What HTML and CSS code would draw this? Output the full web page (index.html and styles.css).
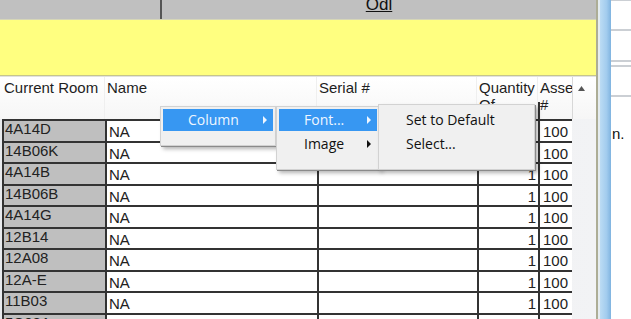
FILE: index.html
```html
<!DOCTYPE html>
<html>
<head>
<meta charset="utf-8">
<link rel="stylesheet" href="styles.css">
</head>
<body>
<div class="screen">
  <div class="main">
    <div class="topbar">
      <div class="tb-left"></div>
      <div class="tb-right"><span class="tb-title">Odl</span></div>
    </div>
    <div class="band"></div>
    <div class="thead">
      <div class="th th-room">Current Room</div>
      <div class="th th-name">Name</div>
      <div class="th th-serial">Serial #</div>
      <div class="th th-qty">Quantity Of</div>
      <div class="th th-asset">Asset #</div>
      <div class="th th-sort"><svg class="sort-icon" width="7" height="5" viewBox="0 0 7 5"><polygon points="3.5,0 7,5 0,5" fill="#555"/></svg></div>
    </div>
    <div class="tbody">
      <div class="row"><div class="td room">4A14D</div><div class="td name">NA</div><div class="td serial"></div><div class="td qty">1</div><div class="td asset">100</div></div>
      <div class="row"><div class="td room">14B06K</div><div class="td name">NA</div><div class="td serial"></div><div class="td qty">1</div><div class="td asset">100</div></div>
      <div class="row"><div class="td room">4A14B</div><div class="td name">NA</div><div class="td serial"></div><div class="td qty">1</div><div class="td asset">100</div></div>
      <div class="row"><div class="td room">14B06B</div><div class="td name">NA</div><div class="td serial"></div><div class="td qty">1</div><div class="td asset">100</div></div>
      <div class="row"><div class="td room">4A14G</div><div class="td name">NA</div><div class="td serial"></div><div class="td qty">1</div><div class="td asset">100</div></div>
      <div class="row"><div class="td room">12B14</div><div class="td name">NA</div><div class="td serial"></div><div class="td qty">1</div><div class="td asset">100</div></div>
      <div class="row"><div class="td room">12A08</div><div class="td name">NA</div><div class="td serial"></div><div class="td qty">1</div><div class="td asset">100</div></div>
      <div class="row"><div class="td room">12A-E</div><div class="td name">NA</div><div class="td serial"></div><div class="td qty">1</div><div class="td asset">100</div></div>
      <div class="row"><div class="td room">11B03</div><div class="td name">NA</div><div class="td serial"></div><div class="td qty">1</div><div class="td asset">100</div></div>
      <div class="row"><div class="td room">5C08A</div><div class="td name">NA</div><div class="td serial"></div><div class="td qty">1</div><div class="td asset">100</div></div>
    </div>
  </div>
  <div class="side">
    <div class="edge"></div>
    <div class="edge2"></div>
    <div class="blue"></div>
    <div class="win">
      <div class="wline wl1"></div>
      <div class="wline wl2"></div>
      <div class="wline wl3"></div>
      <div class="wline wl4"></div>
      <div class="wline wl5"></div>
      <div class="wtext">n.</div>
    </div>
  </div>

  <div class="menu m1">
    <div class="item hl"><span>Column</span><span class="arrow"></span></div>
  </div>
  <div class="menu m2">
    <div class="item hl"><span>Font...</span><span class="arrow"></span></div>
    <div class="item"><span>Image</span><span class="arrow"></span></div>
  </div>
  <div class="menu m3">
    <div class="item"><span>Set to Default</span></div>
    <div class="item"><span>Select...</span></div>
  </div>
</div>
</body>
</html>
```

FILE: styles.css
```css
* { box-sizing: border-box; margin: 0; padding: 0; }
html, body { width: 631px; height: 319px; overflow: hidden; background: #fff; }
body { font-family: "Liberation Sans", Arial, sans-serif; font-size: 15px; color: #1e1e1e; }

.screen { position: relative; display: flex; width: 631px; height: 319px; overflow: hidden; }
.main { width: 596px; flex: none; display: flex; flex-direction: column; }

.topbar { height: 20px; flex: none; display: flex; background: #c0c0c0; border-bottom: 1px solid #d6d6b8; overflow: hidden; }
.tb-left { width: 162px; border-right: 2px solid #555; }
.tb-right { flex: 1; display: flex; justify-content: center; }
.tb-title { font-size: 17px; line-height: 17px; margin-top: -4px; text-decoration: underline; color: #111; }

.band { height: 56px; flex: none; background: #ffff80; border-bottom: 1px solid #c6c68c; }

.thead { height: 43px; flex: none; display: flex; background: linear-gradient(#ffffff, #f6f6f6); border-top: 1px solid #e2e2e2; }
.th { padding: 2px 0 0 2px; line-height: 17px; border-right: 1px solid #efefef; overflow: hidden; color: #1e1e1e; }
.th-room { width: 105px; padding-left: 4px; }
.th-name { width: 212px; }
.th-serial { width: 160px; }
.th-qty { width: 61px; }
.th-asset { width: 35px; background: linear-gradient(#333, #333) left bottom / 2px 17px no-repeat; border-right: 1px solid #d8d8d8; }
.th-sort { flex: 1; border-right: none; padding: 9px 0 0 5px; }
.sort-icon { display: block; }

.tbody { flex: 1; padding-left: 2px; background: linear-gradient(90deg, #e8eaed, #f2f3f5); }
.row { display: grid; grid-template-columns: 103px 212px 160px 61px 34px; width: 570px; height: 21.5px; border-top: 2px solid #333; background: #fff; }
.td { border-left: 2px solid #333; line-height: 16px; white-space: nowrap; overflow: hidden; color: #222; }
.room { background: #bfbfbf; padding-left: 1px; }
.name { padding: 3px 0 0 2px; }
.qty { text-align: right; padding: 3px 2px 0 0; }
.asset { padding: 3px 0 0 3px; }

.side { flex: 1; display: flex; }
.edge { width: 2px; background: #adad96; }
.edge2 { width: 2px; background: #e4ecf0; }
.blue { width: 11px; background: linear-gradient(90deg, #bcdcf4, #a2ccee 60%, #80b4e0); }
.win { flex: 1; background: #fff; display: flex; flex-direction: column; }
.wline { height: 2px; background: #cbcfd4; }
.wl1 { height: 1px; }
.wl2 { margin-top: 28px; }
.wl3 { margin-top: 29px; }
.wl4 { margin-top: 3px; }
.wl5 { margin-top: 28px; }
.wtext { margin-top: 28px; padding-left: 1px; line-height: 17px; color: #111; }

.menu { position: absolute; display: flex; flex-direction: column; gap: 2px; padding: 2px; background: #f0f0f0; border: 1px solid #d2d2d2; box-shadow: 1px 1px 0 #8a8a8a, 3px 3px 4px rgba(0,0,0,0.3); font-family: "Open Sans", "Noto Sans", sans-serif; font-size: 14px; color: #111; }
.m1 { left: 160px; top: 106px; width: 116px; height: 40px; z-index: 1; }
.m2 { left: 276px; top: 106px; width: 104px; height: 64px; z-index: 2; }
.m3 { left: 378px; top: 104px; width: 157px; height: 66px; padding-top: 4px; z-index: 3; }
.item { height: 22px; line-height: 22px; padding: 0 6px 0 25px; display: flex; align-items: center; justify-content: space-between; white-space: nowrap; }
.item.hl { background: #3797f2; color: #eef6ff; }
.arrow { width: 0; height: 0; border-left: 4px solid currentColor; border-top: 4px solid transparent; border-bottom: 4px solid transparent; }
```
